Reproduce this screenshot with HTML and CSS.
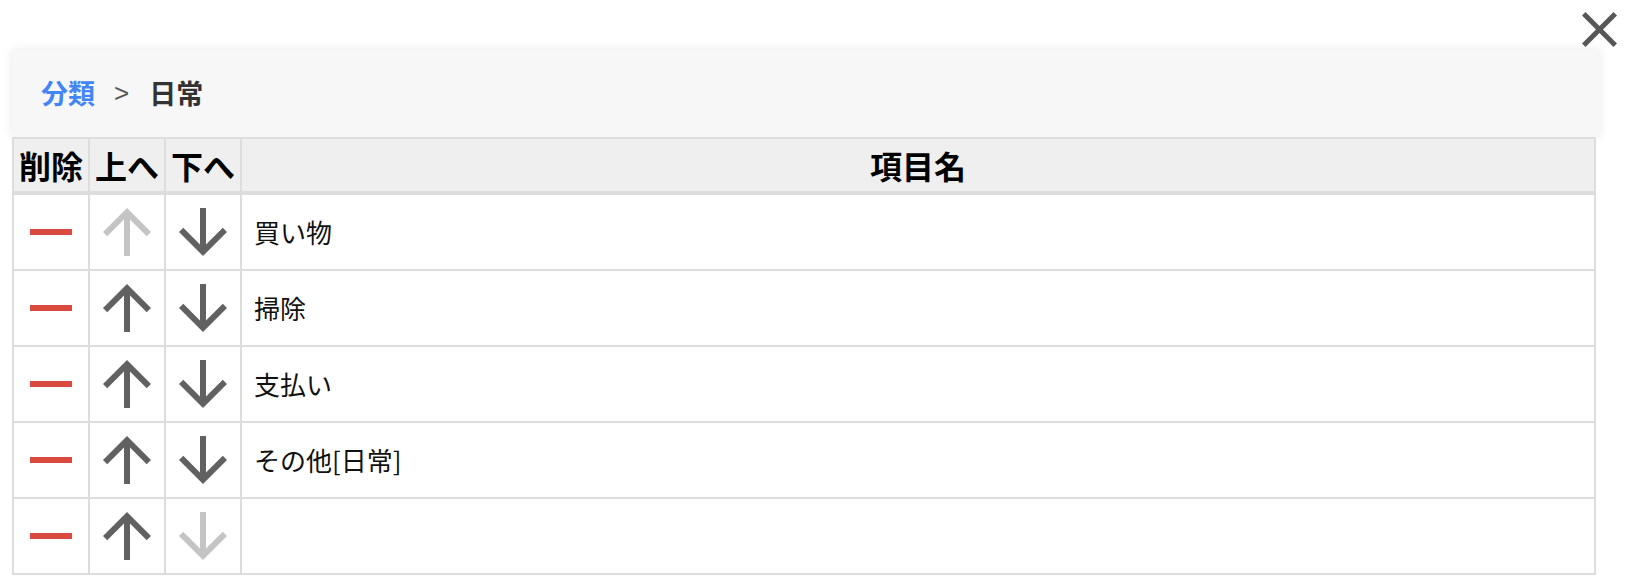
FILE: index.html
```html
<!DOCTYPE html>
<html lang="ja">
<head>
<meta charset="utf-8">
<title>分類 &gt; 日常</title>
<link rel="stylesheet" href="styles.css">
</head>
<body>
<div class="page">
  <button class="close" aria-label="閉じる">
    <svg viewBox="5 5 14 14" width="35" height="35"><path d="M19 6.41L17.59 5 12 10.59 6.41 5 5 6.41 10.59 12 5 17.59 6.41 19 12 13.41 17.59 19 19 17.59 13.41 12z"/></svg>
  </button>
  <div class="panel">
    <nav class="crumbs">
      <a class="crumb-link" href="#">分類</a>
      <span class="crumb-sep">&gt;</span>
      <span class="crumb-current">日常</span>
    </nav>
  </div>
  <table class="items">
    <thead>
      <tr>
        <th class="col-icon">削除</th>
        <th class="col-icon">上へ</th>
        <th class="col-icon">下へ</th>
        <th>項目名</th>
      </tr>
    </thead>
    <tbody>
      <tr>
        <td class="col-icon"><svg class="ico ico-del" viewBox="0 0 24 24"><path d="M19 13H5v-2h14v2z"/></svg></td>
        <td class="col-icon"><svg class="ico ico-off" viewBox="0 0 24 24"><path d="M4 12l1.41 1.41L11 7.83V20h2V7.83l5.58 5.59L20 12l-8-8-8 8z"/></svg></td>
        <td class="col-icon"><svg class="ico ico-move" viewBox="0 0 24 24"><path d="M20 12l-1.41-1.41L13 16.17V4h-2v12.17l-5.58-5.59L4 12l8 8 8-8z"/></svg></td>
        <td class="name">買い物</td>
      </tr>
      <tr>
        <td class="col-icon"><svg class="ico ico-del" viewBox="0 0 24 24"><path d="M19 13H5v-2h14v2z"/></svg></td>
        <td class="col-icon"><svg class="ico ico-move" viewBox="0 0 24 24"><path d="M4 12l1.41 1.41L11 7.83V20h2V7.83l5.58 5.59L20 12l-8-8-8 8z"/></svg></td>
        <td class="col-icon"><svg class="ico ico-move" viewBox="0 0 24 24"><path d="M20 12l-1.41-1.41L13 16.17V4h-2v12.17l-5.58-5.59L4 12l8 8 8-8z"/></svg></td>
        <td class="name">掃除</td>
      </tr>
      <tr>
        <td class="col-icon"><svg class="ico ico-del" viewBox="0 0 24 24"><path d="M19 13H5v-2h14v2z"/></svg></td>
        <td class="col-icon"><svg class="ico ico-move" viewBox="0 0 24 24"><path d="M4 12l1.41 1.41L11 7.83V20h2V7.83l5.58 5.59L20 12l-8-8-8 8z"/></svg></td>
        <td class="col-icon"><svg class="ico ico-move" viewBox="0 0 24 24"><path d="M20 12l-1.41-1.41L13 16.17V4h-2v12.17l-5.58-5.59L4 12l8 8 8-8z"/></svg></td>
        <td class="name">支払い</td>
      </tr>
      <tr>
        <td class="col-icon"><svg class="ico ico-del" viewBox="0 0 24 24"><path d="M19 13H5v-2h14v2z"/></svg></td>
        <td class="col-icon"><svg class="ico ico-move" viewBox="0 0 24 24"><path d="M4 12l1.41 1.41L11 7.83V20h2V7.83l5.58 5.59L20 12l-8-8-8 8z"/></svg></td>
        <td class="col-icon"><svg class="ico ico-move" viewBox="0 0 24 24"><path d="M20 12l-1.41-1.41L13 16.17V4h-2v12.17l-5.58-5.59L4 12l8 8 8-8z"/></svg></td>
        <td class="name">その他[日常]</td>
      </tr>
      <tr>
        <td class="col-icon"><svg class="ico ico-del" viewBox="0 0 24 24"><path d="M19 13H5v-2h14v2z"/></svg></td>
        <td class="col-icon"><svg class="ico ico-move" viewBox="0 0 24 24"><path d="M4 12l1.41 1.41L11 7.83V20h2V7.83l5.58 5.59L20 12l-8-8-8 8z"/></svg></td>
        <td class="col-icon"><svg class="ico ico-off" viewBox="0 0 24 24"><path d="M20 12l-1.41-1.41L13 16.17V4h-2v12.17l-5.58-5.59L4 12l8 8 8-8z"/></svg></td>
        <td class="name"></td>
      </tr>
    </tbody>
  </table>
</div>
</body>
</html>
```
FILE: styles.css
```css
html, body {
  margin: 0;
  padding: 0;
  background: #fff;
}

body {
  font-family: "Noto Sans CJK JP", "Noto Sans", sans-serif;
  color: #111;
  overflow: hidden;
}

.page {
  position: relative;
  padding: 50px 25px 0 12px;
}

.close {
  position: absolute;
  top: 12px;
  left: 1582px;
  padding: 0;
  margin: 0;
  border: 0;
  background: none;
  line-height: 0;
  cursor: pointer;
}

.close svg {
  display: block;
  fill: #575757;
}

.panel {
  height: 87px;
  background: #f7f7f7;
  box-shadow: 0 0 10px rgba(0, 0, 0, 0.09);
  display: flex;
  align-items: center;
  padding-left: 29px;
  box-sizing: border-box;
}

.crumbs {
  display: flex;
  align-items: center;
  font-size: 27px;
  line-height: 1;
  margin-top: -2px;
}

.crumb-link {
  color: #4285f4;
  font-weight: 700;
  text-decoration: none;
}

.crumb-sep {
  color: #555;
  margin: 0 20px 0 19px;
  font-family: "Liberation Sans", "Noto Sans", sans-serif;
  font-size: 26px;
}

.crumb-current {
  color: #333;
  font-weight: 700;
}

.items {
  width: calc(100% - 4px);
  border-collapse: collapse;
  background: #fff;
}

.items th,
.items td {
  border: 2px solid #ddd;
}

.items th {
  background: #efefef;
  font-size: 32px;
  font-weight: 700;
  color: #000;
  height: 52px;
  line-height: 52px;
  padding: 0 1px;
  text-align: center;
  border-bottom-width: 4px;
  white-space: nowrap;
}

.items td {
  padding: 1px;
  line-height: 1;
  vertical-align: middle;
}

.items .col-icon {
  width: 72px;
}

.items td.name {
  padding: 0 12px;
  font-size: 26px;
  color: #111;
}

.ico {
  display: block;
  width: 72px;
  height: 72px;
}

.ico-del { fill: #d9493e; }
.ico-move { fill: #616161; }
.ico-off { fill: #c4c4c4; }
```
